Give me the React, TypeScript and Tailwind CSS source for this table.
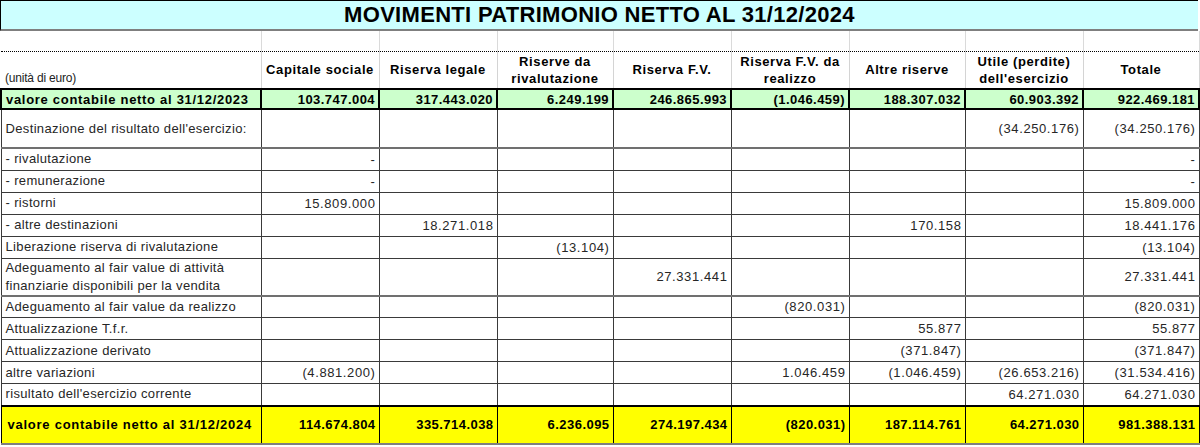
import React from "react";

const COLS = [260, 118, 118, 116, 118, 118, 116, 118, 116];

const HEADERS = [
  ["Capitale sociale"],
  ["Riserva legale"],
  ["Riserve da", "rivalutazione"],
  ["Riserva F.V."],
  ["Riserva F.V. da", "realizzo"],
  ["Altre riserve"],
  ["Utile (perdite)", "dell'esercizio"],
  ["Totale"],
];

type Row = { label: string[]; values: string[]; h: string };

const ROWS: Row[] = [
  { label: ["Destinazione del risultato dell'esercizio:"], values: ["", "", "", "", "", "", "(34.250.176)", "(34.250.176)"], h: "h-[39px]" },
  { label: ["- rivalutazione"], values: ["-", "", "", "", "", "", "", "-"], h: "h-[22px]" },
  { label: ["- remunerazione"], values: ["-", "", "", "", "", "", "", "-"], h: "h-[22px]" },
  { label: ["- ristorni"], values: ["15.809.000", "", "", "", "", "", "", "15.809.000"], h: "h-[22px]" },
  { label: ["- altre destinazioni"], values: ["", "18.271.018", "", "", "", "170.158", "", "18.441.176"], h: "h-[22px]" },
  { label: ["Liberazione riserva di rivalutazione"], values: ["", "", "(13.104)", "", "", "", "", "(13.104)"], h: "h-[22px]" },
  {
    label: ["Adeguamento al fair value di attività", "finanziarie disponibili per la vendita"],
    values: ["", "", "", "27.331.441", "", "", "", "27.331.441"],
    h: "h-[37px]",
  },
  { label: ["Adeguamento al fair value da realizzo"], values: ["", "", "", "", "(820.031)", "", "", "(820.031)"], h: "h-[22px]" },
  { label: ["Attualizzazione T.f.r."], values: ["", "", "", "", "", "55.877", "", "55.877"], h: "h-[22px]" },
  { label: ["Attualizzazione derivato"], values: ["", "", "", "", "", "(371.847)", "", "(371.847)"], h: "h-[22px]" },
  {
    label: ["altre variazioni"],
    values: ["(4.881.200)", "", "", "", "1.046.459", "(1.046.459)", "(26.653.216)", "(31.534.416)"],
    h: "h-[22px]",
  },
  { label: ["risultato dell'esercizio corrente"], values: ["", "", "", "", "", "", "64.271.030", "64.271.030"], h: "h-[22px]" },
];

const OPENING = ["103.747.004", "317.443.020", "6.249.199", "246.865.993", "(1.046.459)", "188.307.032", "60.903.392", "922.469.181"];
const CLOSING = ["114.674.804", "335.714.038", "6.236.095", "274.197.434", "(820.031)", "187.114.761", "64.271.030", "981.388.131"];

export default function App() {
  return (
    <div className="w-[1200px] h-[447px] bg-white font-['Liberation_Sans',Arial,sans-serif] text-black">
      {/* Title */}
      <div className="h-[31px] w-[1198px] bg-[#ccffff] border-t border-l border-black border-b-2 border-b-[#7f7f7f] flex items-center justify-center">
        <span className="text-[22px] font-bold tracking-[0.3px] leading-none">MOVIMENTI PATRIMONIO NETTO AL 31/12/2024</span>
      </div>

      <table className="table-fixed border-collapse w-[1198px]">
        <colgroup>
          {COLS.map((w, i) => (
            <col key={i} style={{ width: w }} />
          ))}
        </colgroup>
        <tbody>
          {/* spacer row */}
          <tr className="h-[20px] border-b border-dotted border-b-black">
            {COLS.map((_, i) => (
              <td key={i} className="border-r border-[#dadada] p-0" />
            ))}
          </tr>

          {/* column headers */}
          <tr className="h-[38px]">
            <td className="border-r border-[#d4d4d4] align-bottom pl-[4px] pb-[4px] text-[12px] tracking-[-0.2px] text-[#222] leading-none">
              (unità di euro)
            </td>
            {HEADERS.map((lines, i) => (
              <td key={i} className="border-r border-[#d4d4d4] p-0 text-center align-middle text-[13px] font-bold tracking-[0.6px] leading-[17px]">
                {lines.map((l, j) => (
                  <div key={j}>{l}</div>
                ))}
              </td>
            ))}
          </tr>

          {/* opening balance */}
          <tr className="h-[20px] bg-[#ccffcc] border-2 border-black">
            <td className="border-r-2 border-black pl-[4px] text-[13px] font-bold tracking-[0.7px] whitespace-nowrap leading-none">
              valore contabile netto al 31/12/2023
            </td>
            {OPENING.map((v, i) => (
              <td key={i} className="border-r-2 border-black pr-[3px] text-right text-[13px] font-bold tracking-[0.45px] leading-none">
                {v}
              </td>
            ))}
          </tr>

          {ROWS.map((r, ri) => (
            <tr key={ri} className={`${r.h} border-b border-[#3a3a3a] ${ri === 0 || ri === 6 ? "border-b-2 border-b-[#707070]" : ""}`}>
              <td className="border-x border-[#3a3a3a] pl-[4px] text-[13px] tracking-[0.35px] text-[#262626] leading-[18px] whitespace-nowrap">
                {r.label.map((l, j) => (
                  <div key={j}>{l}</div>
                ))}
              </td>
              {r.values.map((v, i) => (
                <td key={i} className="border-r border-[#3a3a3a] pr-[3px] text-right text-[13px] tracking-[0.6px] text-[#262626] leading-none">
                  {v}
                </td>
              ))}
            </tr>
          ))}

          {/* closing balance */}
          <tr className="h-[38px] bg-[#ffff00] border-t-2 border-t-black border-x border-x-black border-b-2 border-b-[#7f7f7f]">
            <td className="border-r border-black pl-[6px] text-[13px] font-bold tracking-[0.75px] whitespace-nowrap leading-none">
              valore contabile netto al 31/12/2024
            </td>
            {CLOSING.map((v, i) => (
              <td key={i} className="border-r border-black pr-[3px] text-right text-[13px] font-bold tracking-[0.45px] leading-none">
                {v}
              </td>
            ))}
          </tr>
        </tbody>
      </table>
    </div>
  );
}
